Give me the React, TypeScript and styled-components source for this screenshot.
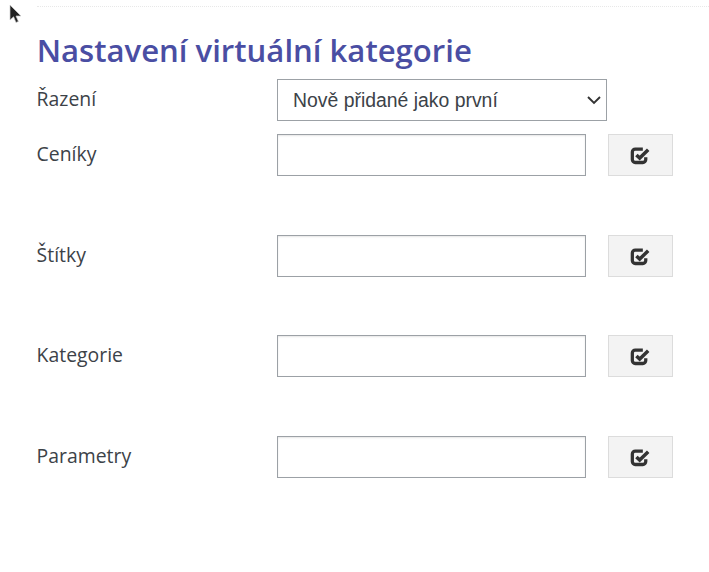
import React from 'react';
import styled, { createGlobalStyle } from 'styled-components';

const Global = createGlobalStyle`
  html, body { margin: 0; padding: 0; background: #fff; }
  body { width: 709px; height: 572px; overflow: hidden; }
`;

const Page = styled.div`
  position: relative;
  width: 709px;
  height: 572px;
  padding: 6px 0 0 37px;
  box-sizing: border-box;
  font-family: "Open Sans", sans-serif;
  color: #3c4248;
`;

const Cursor = styled.svg`
  position: absolute;
  left: 9px;
  top: 4px;
`;

const Rule = styled.div`
  border-top: 1px dotted #e8e8e8;
  margin-bottom: 14px;
`;

const Title = styled.h1`
  margin: 0 0 0 -0.3px;
  font-size: 31.1px;
  line-height: 58px;
  font-weight: 600;
  color: #4a4ea3;
`;

const Row = styled.div<{ $height: number }>`
  display: flex;
  align-items: flex-start;
  height: ${p => p.$height}px;
`;

const Label = styled.div`
  width: 240px;
  font-size: 19.4px;
  line-height: 40.6px;
  margin-left: -0.4px;
  margin-right: 0.4px;
`;

const SelectBox = styled.div`
  width: 330px;
  height: 42px;
  box-sizing: border-box;
  border: 1px solid #9ca1a6;
  display: flex;
  align-items: center;
  justify-content: space-between;
  padding: 0 4px 0 15px;
  font-family: "Liberation Sans", sans-serif;
  font-size: 19.4px;
  color: #3c4248;
`;

const Input = styled.input`
  width: 309px;
  height: 42px;
  box-sizing: border-box;
  border: 1px solid #9ca1a6;
  box-shadow: inset 0 1px 2px rgba(0, 0, 0, 0.1);
  outline: none;
  padding: 0 10px;
  background: #fff;
`;

const IconButton = styled.button`
  width: 65px;
  height: 42px;
  margin-left: 22px;
  box-sizing: border-box;
  border: 1px solid #dcdcdc;
  background: #f3f3f3;
  display: flex;
  align-items: center;
  justify-content: center;
  padding: 0;
`;

const rows = [
  { label: 'Ceníky', height: 101 },
  { label: 'Štítky', height: 100 },
  { label: 'Kategorie', height: 101 },
  { label: 'Parametry', height: 42 },
];

const CheckIcon = () => (
  <svg width="21" height="19" viewBox="0 0 18 16" fill="none">
    <path d="M13.5 9.5V11.5A2.5 2.5 0 0 1 11 14H4.5A2.5 2.5 0 0 1 2 11.5V5A2.5 2.5 0 0 1 4.5 2.5H11" stroke="#333" strokeWidth="2.8" />
    <path d="M5.5 7.5L8.3 10.2L15.6 3" stroke="#333" strokeWidth="3" />
  </svg>
);

export default function App() {
  return (
    <Page>
      <Global />
      <Cursor width="14" height="20" viewBox="0 0 14 20">
        <path d="M1 1V16L4.6 12.8L7 18.5L9.4 17.4L7 12H12Z" fill="#222" stroke="#ccc" strokeWidth="0.7" />
      </Cursor>
      <Rule />
      <Title>Nastavení virtuální kategorie</Title>
      <Row $height={55}>
        <Label>Řazení</Label>
        <SelectBox>
          Nově přidané jako první
          <svg width="16" height="16" viewBox="0 0 16 16" fill="none">
            <path d="M2 5L8 11L14 5" stroke="#333" strokeWidth="1.9" />
          </svg>
        </SelectBox>
      </Row>
      {rows.map(r => (
        <Row key={r.label} $height={r.height}>
          <Label>{r.label}</Label>
          <Input />
          <IconButton aria-label={r.label}><CheckIcon /></IconButton>
        </Row>
      ))}
    </Page>
  );
}
